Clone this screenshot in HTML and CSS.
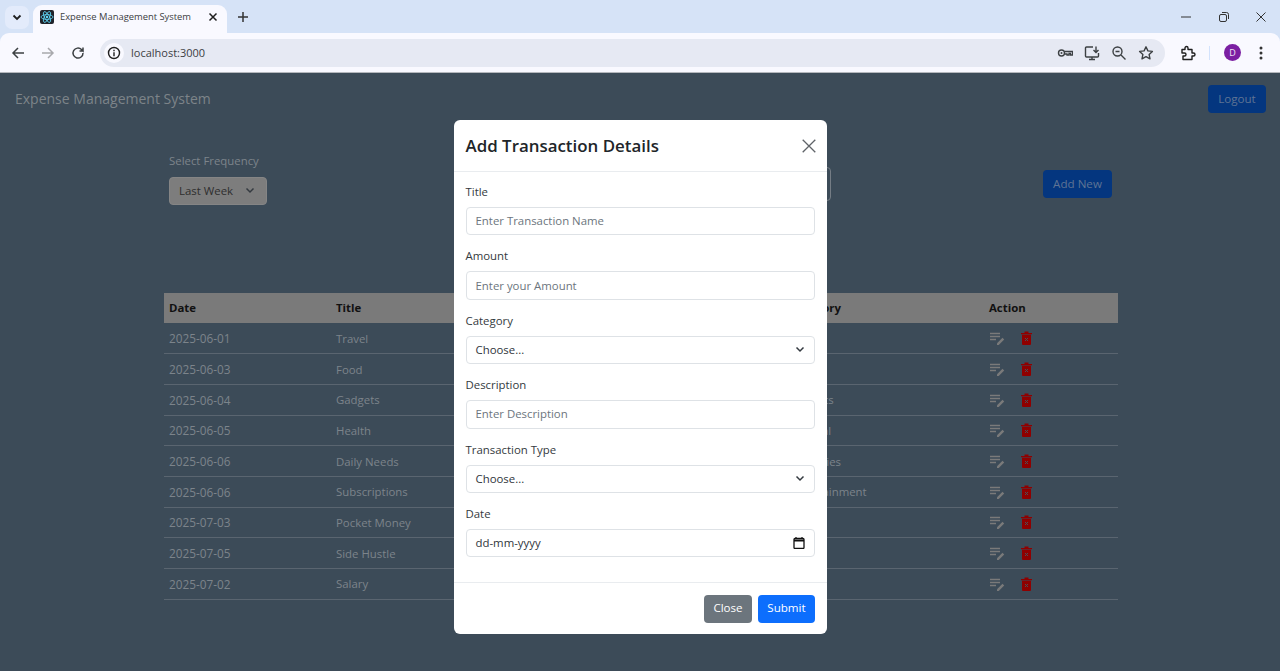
FILE: index.html
```html
<!DOCTYPE html>
<html lang="en">
<head>
<meta charset="utf-8">
<title>Expense Management System</title>
<link rel="stylesheet" href="styles.css">
</head>
<body>
<svg class="defs" width="0" height="0">
  <symbol id="edit" viewBox="0 -1 16 14"><path d="M1 1.500h10M1 4.500h10M1 7.500h6" stroke="#7a7a7a" stroke-width="1.300"/><path d="M8 13v-1.700l5.500-5.500 1.700 1.700L9.700 13z" fill="#7a7a7a"/></symbol>
  <symbol id="trash" viewBox="0 0 11 14"><path d="M0 2h11v1.300H0zM3.500.5h4V2h-4zM1 3.800h9V13a1 1 0 0 1-1 1H2a1 1 0 0 1-1-1z" fill="#8f0000"/><path d="M4 7l3 3M7 7l-3 3" stroke="#4a4f57" stroke-width="1"/></symbol>
  <symbol id="chev" viewBox="0 0 10 10"><path d="M1.500 3.500 5 7l3.500-3.500" fill="none" stroke="#343a40" stroke-width="1.500"/></symbol>
</svg>
<div class="chrome">
  <div class="tabstrip">
    <div class="tabsearch"><svg width="12" height="12" viewBox="0 0 12 12"><path d="M2.500 4.500 6 8l3.500-3.500" fill="none" stroke="#1f1f1f" stroke-width="1.800"/></svg></div>
    <div class="tab">
      <svg class="favicon" width="14" height="14" viewBox="0 0 14 14"><rect width="14" height="14" rx="2" fill="#20232a"/><g fill="none" stroke="#61dafb" stroke-width=".8"><ellipse cx="7" cy="7" rx="6" ry="2.400"/><ellipse cx="7" cy="7" rx="6" ry="2.400" transform="rotate(60 7 7)"/><ellipse cx="7" cy="7" rx="6" ry="2.400" transform="rotate(120 7 7)"/></g><circle cx="7" cy="7" r="1.200" fill="#61dafb"/></svg>
      <span class="tabtitle">Expense Management System</span>
      <svg class="tabclose" width="10" height="10" viewBox="0 0 10 10"><path d="M1.500 1.500l7 7M8.500 1.500l-7 7" stroke="#1f1f1f" stroke-width="1.500"/></svg>
    </div>
    <svg class="newtab" width="12" height="12" viewBox="0 0 12 12"><path d="M6 1v10M1 6h10" stroke="#333" stroke-width="1.500"/></svg>
    <div class="winctl">
      <svg width="10" height="10" viewBox="0 0 10 10"><path d="M0 5h10" stroke="#333"/></svg>
      <svg width="10" height="10" viewBox="0 0 10 10"><rect x=".5" y="2.500" width="7" height="7" rx="1.500" fill="none" stroke="#333"/><path d="M3 .5h4.500a2 2 0 0 1 2 2V7" fill="none" stroke="#333"/></svg>
      <svg width="10" height="10" viewBox="0 0 10 10"><path d="M.5.5l9 9M9.500.5l-9 9" stroke="#333"/></svg>
    </div>
  </div>
  <div class="toolbar">
    <svg width="14" height="14" viewBox="0 0 14 14"><path d="M13 7H2M7 2 2 7l5 5" fill="none" stroke="#3c4043" stroke-width="1.500"/></svg>
    <svg width="14" height="14" viewBox="0 0 14 14"><path d="M1 7h11M7 2l5 5-5 5" fill="none" stroke="#a8a9ad" stroke-width="1.500"/></svg>
    <svg width="14" height="14" viewBox="0 0 14 14"><path d="M12 7a5 5 0 1 1-1.500-3.500L12 5V1.500M12 5H8.500" fill="none" stroke="#3c4043" stroke-width="1.500"/></svg>
    <div class="omnibox">
      <span class="infochip"><svg width="14" height="14" viewBox="0 0 14 14"><circle cx="7" cy="7" r="5.500" fill="none" stroke="#1f1f1f" stroke-width="1.400"/><path d="M7 6.200v4M7 3.800v1.400" stroke="#1f1f1f" stroke-width="1.400"/></svg></span>
      <span class="url">localhost:3000</span>
      <div class="omni-icons">
        <svg width="16" height="16" viewBox="0 0 16 16"><circle cx="4.500" cy="8" r="3" fill="none" stroke="#3c4043" stroke-width="1.400"/><circle cx="4.500" cy="8" r="1" fill="#3c4043"/><path d="M7.500 6.500h8v3.500h-2V8.500h-1.500V10h-2V9H7.500" fill="none" stroke="#3c4043" stroke-width="1.300"/></svg>
        <svg width="16" height="16" viewBox="0 0 16 16"><path d="M9 2H2.500a1 1 0 0 0-1 1v8a1 1 0 0 0 1 1h11a1 1 0 0 0 1-1V8M5 14.500h6M8 12v2" fill="none" stroke="#3c4043" stroke-width="1.400"/><path d="M12 1.500V7M9.500 5l2.500 2.500L14.500 5" fill="none" stroke="#3c4043" stroke-width="1.400"/></svg>
        <svg width="16" height="16" viewBox="0 0 16 16"><circle cx="6.500" cy="6.500" r="4.500" fill="none" stroke="#3c4043" stroke-width="1.400"/><path d="M10 10l4.500 4.500M4.500 6.500h4" stroke="#3c4043" stroke-width="1.400"/></svg>
        <svg width="16" height="16" viewBox="0 0 16 16"><path d="M8 1.800l1.900 4.100 4.500.5-3.300 3 .9 4.400L8 11.600l-4 2.200.9-4.400-3.300-3 4.500-.5z" fill="none" stroke="#3c4043" stroke-width="1.400" stroke-linejoin="round"/></svg>
      </div>
    </div>
    <svg class="ext" width="16" height="16" viewBox="0 0 16 16"><path d="M2 4.500h3V3a1.500 1.500 0 0 1 3 0v1.500h4V8h1.500a1.500 1.500 0 0 1 0 3H12v3.500H3V11h1.500a1.500 1.500 0 0 0 0-3H2z" fill="none" stroke="#1f1f1f" stroke-width="1.400" stroke-linejoin="round"/></svg>
    <span class="divider"></span>
    <span class="avatar">D</span>
    <svg class="dots" width="4" height="14" viewBox="0 0 4 14"><circle cx="2" cy="2" r="1.500" fill="#333"/><circle cx="2" cy="7" r="1.500" fill="#333"/><circle cx="2" cy="12" r="1.500" fill="#333"/></svg>
  </div>
</div>

<div class="page">
  <header class="navbar">
    <span class="brand">Expense Management System</span>
    <button class="btn btn-primary btn-logout">Logout</button>
  </header>
  <main class="content">
    <section class="filters">
      <div class="freq">
        <label class="freq-label">Select Frequency</label>
        <div class="select-box">Last Week <svg width="10" height="10"><use href="#chev"/></svg></div>
      </div>
      <div class="switcher"></div>
      <button class="btn btn-primary btn-add">Add New</button>
    </section>
    <table class="tx-table">
      <thead><tr><th class="c1">Date</th><th class="c2">Title</th><th class="c3"></th><th class="c4">Category</th><th class="c5">Action</th></tr></thead>
      <tbody>
        <tr><td>2025-06-01</td><td>Travel</td><td></td><td>Travel</td><td><span class="acts"><svg width="16" height="14"><use href="#edit"/></svg><svg width="11" height="14"><use href="#trash"/></svg></span></td></tr>
        <tr><td>2025-06-03</td><td>Food</td><td></td><td>Food</td><td><span class="acts"><svg width="16" height="14"><use href="#edit"/></svg><svg width="11" height="14"><use href="#trash"/></svg></span></td></tr>
        <tr><td>2025-06-04</td><td>Gadgets</td><td></td><td>Gadgets</td><td><span class="acts"><svg width="16" height="14"><use href="#edit"/></svg><svg width="11" height="14"><use href="#trash"/></svg></span></td></tr>
        <tr><td>2025-06-05</td><td>Health</td><td></td><td>Medical</td><td><span class="acts"><svg width="16" height="14"><use href="#edit"/></svg><svg width="11" height="14"><use href="#trash"/></svg></span></td></tr>
        <tr><td>2025-06-06</td><td>Daily Needs</td><td></td><td>Groceries</td><td><span class="acts"><svg width="16" height="14"><use href="#edit"/></svg><svg width="11" height="14"><use href="#trash"/></svg></span></td></tr>
        <tr><td>2025-06-06</td><td>Subscriptions</td><td></td><td>Entertainment</td><td><span class="acts"><svg width="16" height="14"><use href="#edit"/></svg><svg width="11" height="14"><use href="#trash"/></svg></span></td></tr>
        <tr><td>2025-07-03</td><td>Pocket Money</td><td></td><td>Other</td><td><span class="acts"><svg width="16" height="14"><use href="#edit"/></svg><svg width="11" height="14"><use href="#trash"/></svg></span></td></tr>
        <tr><td>2025-07-05</td><td>Side Hustle</td><td></td><td>Other</td><td><span class="acts"><svg width="16" height="14"><use href="#edit"/></svg><svg width="11" height="14"><use href="#trash"/></svg></span></td></tr>
        <tr><td>2025-07-02</td><td>Salary</td><td></td><td>Salary</td><td><span class="acts"><svg width="16" height="14"><use href="#edit"/></svg><svg width="11" height="14"><use href="#trash"/></svg></span></td></tr>
      </tbody>
    </table>
  </main>

  <div class="modal">
    <div class="modal-header">
      <h2 class="modal-title">Add Transaction Details</h2>
      <svg width="14" height="14" viewBox="0 0 14 14"><path d="M.7.7l12.600 12.600M13.300.7.7 13.300" stroke="#5f6368" stroke-width="1.300"/></svg>
    </div>
    <form class="modal-body">
      <div class="field"><label>Title</label><div class="control ph">Enter Transaction Name</div></div>
      <div class="field"><label>Amount</label><div class="control ph">Enter your Amount</div></div>
      <div class="field"><label>Category</label><div class="control">Choose...<svg width="10" height="10"><use href="#chev"/></svg></div></div>
      <div class="field"><label>Description</label><div class="control ph">Enter Description</div></div>
      <div class="field"><label>Transaction Type</label><div class="control">Choose...<svg width="10" height="10"><use href="#chev"/></svg></div></div>
      <div class="field"><label>Date</label><div class="control">dd-mm-yyyy<svg width="12" height="12" viewBox="0 0 12 12"><path d="M3 0v2M9 0v2" stroke="#111" stroke-width="1.200"/><rect x="1" y="1.500" width="10" height="10" rx="1" fill="none" stroke="#111" stroke-width="1.300"/><path d="M1 3.500h10" stroke="#111" stroke-width="2"/></svg></div></div>
    </form>
    <div class="modal-footer">
      <button class="btn btn-secondary">Close</button>
      <button class="btn btn-submit">Submit</button>
    </div>
  </div>
</div>
</body>
</html>
```
FILE: styles.css
```css
* { box-sizing: border-box; }
html, body { margin: 0; height: 100%; overflow: hidden; }
body { font-family: "Open Sans", "Noto Sans", sans-serif; font-size: 11.4px; color: #212529; background: #3c4b58; display: flex; flex-direction: column; }
.defs { position: absolute; }
.chrome { flex: none; height: 73px; background: #d6e3f7; border-bottom: 1px solid #b5b8bd; display: flex; flex-direction: column; }
.tabstrip { height: 33px; display: flex; align-items: center; padding-left: 5px; }
.tabsearch { width: 24px; height: 23px; margin-top: 1px; background: #e3ebfb; border-radius: 7px; display: flex; align-items: center; justify-content: center; }
.tab { width: 194px; height: 28px; margin: 5px 0 0 4px; background: #f9f9ff; border-radius: 9px 9px 0 0; display: flex; align-items: center; padding: 0 9px 5px 7px; }
.favicon { flex: none; }
.tabtitle { font-size: 9.400px; color: #3c4043; margin-left: 6px; flex: 1; white-space: nowrap; }
.newtab { margin-left: 10px; margin-top: 1px; }
.winctl { margin-left: auto; display: flex; gap: 27.500px; padding-right: 14px; align-items: center; }
.toolbar { flex: 1; background: #f9f9ff; border-radius: 9px 9px 0 0; display: flex; align-items: center; padding-left: 11px; gap: 16px; }
.omnibox { width: 1065px; height: 28px; margin-left: -1px; background: #e6e9f3; border-radius: 14px; display: flex; align-items: center; padding: 0 11px 0 4px; flex: none; }
.infochip { width: 20px; height: 20px; border-radius: 50%; background: #f9f9ff; display: flex; align-items: center; justify-content: center; flex: none; }
.url { font-size: 11px; color: #3c4043; margin-left: 7px; }
.omni-icons { margin-left: auto; display: flex; gap: 11px; }
.ext { margin-left: -1px; flex: none; }
.divider { width: 1px; height: 14px; background: #d3e3fd; margin-left: -3px; flex: none; }
.avatar { width: 17px; height: 17px; border-radius: 50%; background: #7b1fa2; color: #f1e4f5; font-size: 9px; display: flex; align-items: center; justify-content: center; margin-left: -2px; flex: none; }
.dots { margin-left: 2px; flex: none; }

.page { flex: 1; position: relative; min-height: 0; background: #3c4b58; color: #7c848b; }
.navbar { height: 52px; display: flex; align-items: center; justify-content: space-between; padding: 0 14px 0 15px; }
.brand { font-size: 14px; color: #7d8489; white-space: nowrap; padding-bottom: 2px; }
.btn { font: inherit; font-size: 11.600px; border: 0; border-radius: 4px; height: 28px; padding: 0 0 2px; white-space: nowrap; }
.btn-primary { background: #04367f; color: #5f7494; }
.btn-logout { width: 58px; }
.content { padding: 26px 162px 0 164px; }
.filters { display: flex; align-items: flex-start; }
.freq { padding-left: 5px; width: 420px; flex: none; }
.freq-label { display: block; height: 20px; line-height: 20px; color: #7c848b; }
.select-box { width: 98px; height: 28px; margin-top: 6px; background: #7d7d7d; border: 1px solid #858585; border-radius: 4px; display: flex; align-items: center; justify-content: space-between; padding: 0 11px 2px 9px; color: #2e2e2e; }
.switcher { width: 247px; height: 34px; margin-top: 16px; border: 1px solid #757d85; border-radius: 4px; flex: none; }
.btn-add { margin: 19px 0 0 212px; width: 69px; flex: none; }
.tx-table { width: 954px; margin-top: 88px; border-collapse: collapse; table-layout: fixed; }
.tx-table th { height: 30px; background: #7a7a7a; color: #111; font-weight: 700; text-align: left; padding: 0 5px 2px; }
.tx-table td { height: 30.700px; border-bottom: 1px solid #5a6570; padding: 0 5px; color: #7c848b; white-space: nowrap; }
.tx-table td:first-child { font-size: 11.800px; }
.c1 { width: 167px; } .c2 { width: 167px; } .c3 { width: 287px; } .c4 { width: 199px; } .c5 { width: 134px; }
.acts { display: flex; gap: 16px; align-items: center; }
.modal { position: absolute; left: 454px; top: 47px; width: 373px; height: 514px; background: #fff; border-radius: 6px; color: #212529; display: flex; flex-direction: column; }
.modal-header { height: 52px; border-bottom: 1px solid #e9ecef; display: flex; align-items: center; justify-content: space-between; padding: 0 11px 0 11.500px; }
.modal-title { margin: 0; font-size: 16.900px; font-weight: 600; color: #212529; }
.modal-body { flex: 1; padding: 11px 12px 0 11.500px; display: flex; flex-direction: column; gap: 12px; }
.field label { display: block; height: 19px; margin-bottom: 5px; line-height: 17px; color: #343a40; }
.control { height: 28.400px; border: 1px solid #dee2e6; border-radius: 4px; padding: 0 9px 1px; display: flex; align-items: center; justify-content: space-between; color: #2f353b; }
.control.ph { color: #6c757d; }
.modal-footer { height: 52px; border-top: 1px solid #e9ecef; display: flex; align-items: center; justify-content: flex-end; gap: 6px; padding: 0 12px; }
.btn-secondary { background: #6c757d; color: #fff; width: 48px; }
.btn-submit { background: #0d6efd; color: #fff; width: 57px; }
```
